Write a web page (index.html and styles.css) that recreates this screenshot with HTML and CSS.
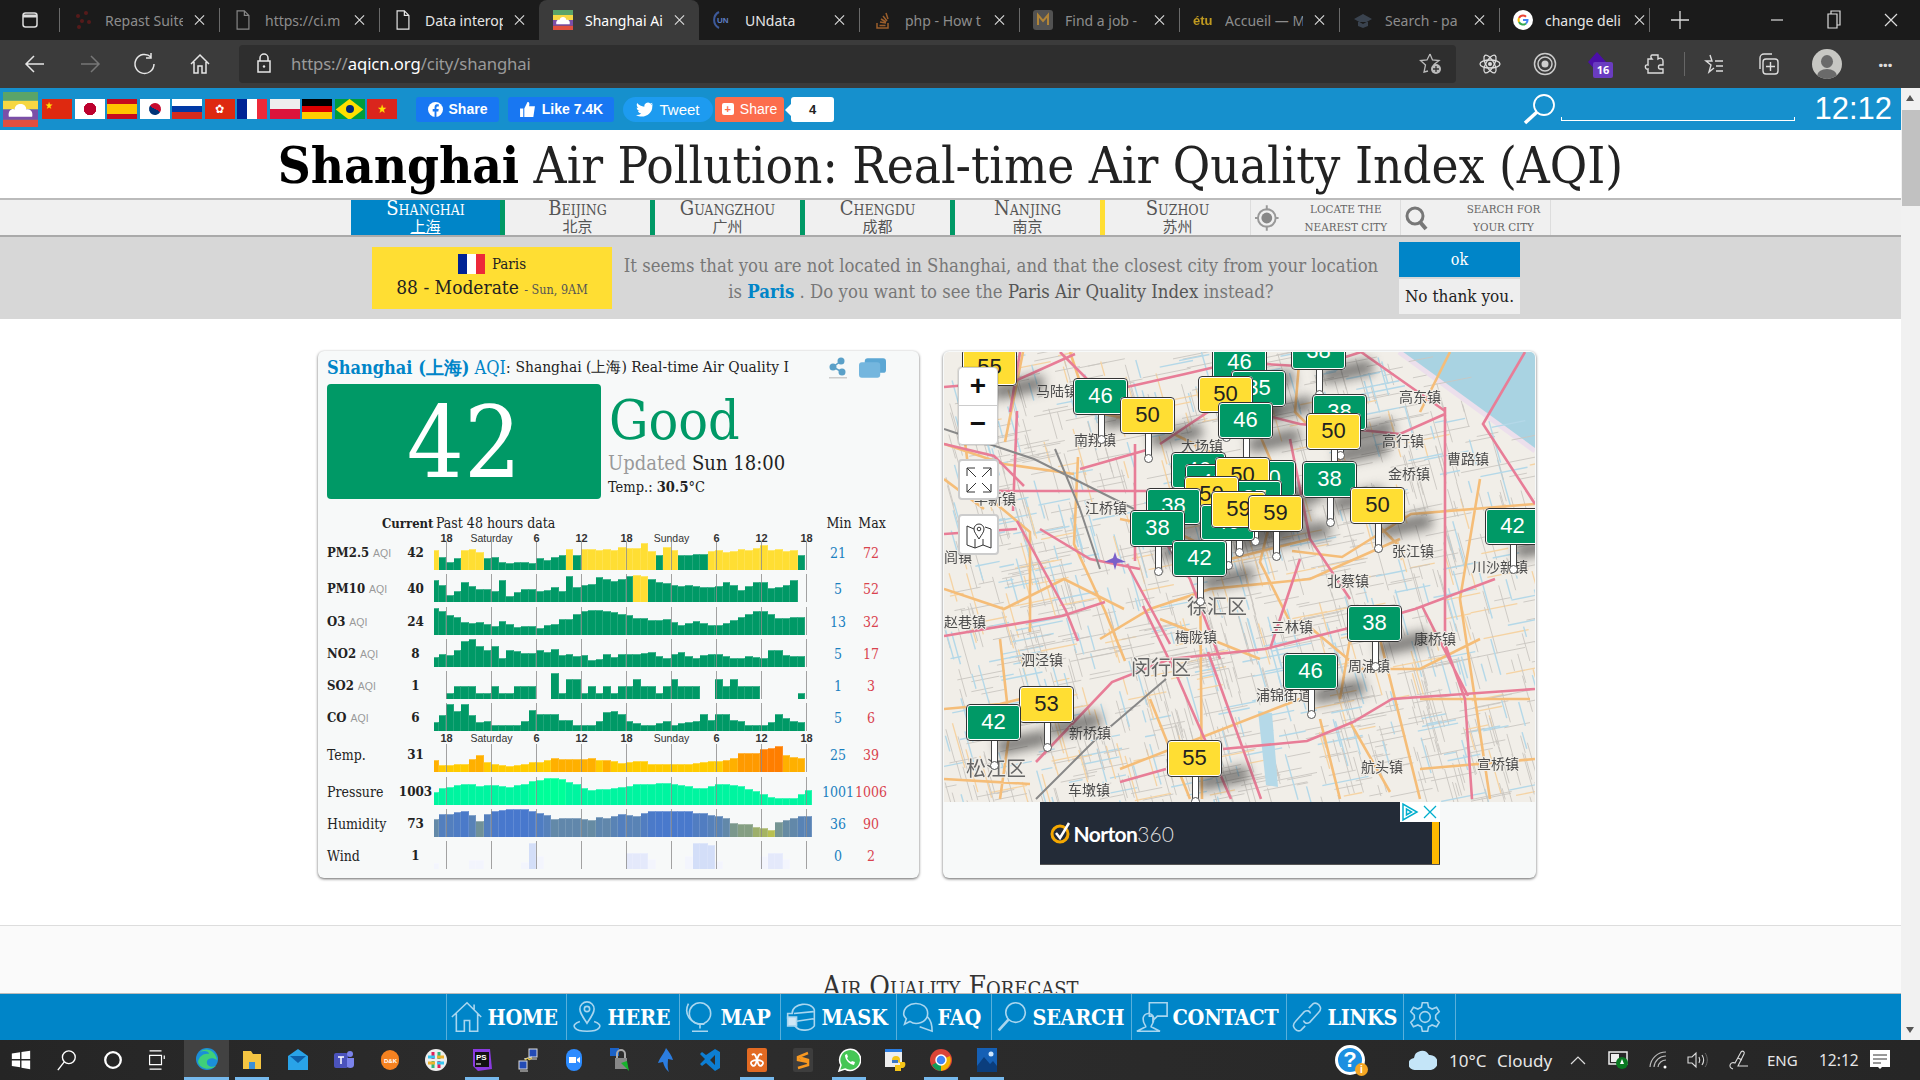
FILE: index.html
```html
<!DOCTYPE html>
<html lang="en">
<head>
<meta charset="utf-8">
<title>Shanghai Air Pollution</title>
<link rel="stylesheet" href="styles.css">
</head>
<body>
<svg class="sprite" width="0" height="0">
  <symbol id="x" viewBox="0 0 12 12"><path d="M1 1l10 10M11 1L1 11" fill="none" stroke="currentColor" stroke-width="1.2"/></symbol>
  <symbol id="doc" viewBox="0 0 16 22"><path d="M1.5 1h8l5 5v15h-13zM9.500 1v5h5" fill="none" stroke="currentColor" stroke-width="1.300"/></symbol>
  <symbol id="aq" viewBox="0 0 24 24"><rect width="24" height="6" fill="#5aa469"/><rect y="6" width="24" height="6" fill="#f6d743"/><rect y="12" width="24" height="7" fill="#7b4fa8"/><rect y="19" width="24" height="5" fill="#e04f3f"/><path d="M4 17c-1-5 3-6 4-5 0-5 8-5 8 0 2-1 5 1 4 5z" fill="#fff"/></symbol>
</svg>
<header class="tabs">
  <span class="win-ico"><svg width="20" height="20" viewBox="0 0 20 20"><rect x="3" y="3" width="14" height="14" rx="2.500" fill="none" stroke="#ddd" stroke-width="1.500"/><path d="M3 6h14" stroke="#ddd" stroke-width="3"/></svg></span>
  <div class="tab dim"><svg class="fav" viewBox="0 0 20 20"><g fill="#5a1a1a"><circle cx="5" cy="6" r="2"/><circle cx="13" cy="3" r="2"/><circle cx="9" cy="11" r="2"/><circle cx="16" cy="12" r="2"/><circle cx="6" cy="17" r="2"/></g></svg><span class="tt">Repast Suite</span><svg class="x"><use href="#x"/></svg></div>
  <div class="tab dim"><svg class="fav"><use href="#doc"/></svg><span class="tt">https://ci.m</span><svg class="x"><use href="#x"/></svg></div>
  <div class="tab"><svg class="fav"><use href="#doc"/></svg><span class="tt">Data interop</span><svg class="x"><use href="#x"/></svg></div>
  <div class="tab active"><svg class="fav"><use href="#aq"/></svg><span class="tt">Shanghai Ai</span><svg class="x"><use href="#x"/></svg></div>
  <div class="tab nosep"><svg class="fav" viewBox="0 0 20 20"><path d="M6 2a9 9 0 0 0 0 16" fill="none" stroke="#3e5a9a" stroke-width="2"/><text x="4" y="13" class="favtxt">UN</text></svg><span class="tt">UNdata</span><svg class="x"><use href="#x"/></svg></div>
  <div class="tab dim"><svg class="fav" viewBox="0 0 20 20"><path d="M4 13v5h11v-5M6.500 15.500h6M7 12l6 1M8 9l5 3M10 6l4 5M13 3l2 6" fill="none" stroke="#a2622c" stroke-width="1.500"/></svg><span class="tt">php - How t</span><svg class="x"><use href="#x"/></svg></div>
  <div class="tab dim"><svg class="fav" viewBox="0 0 20 20"><rect width="20" height="20" rx="3" fill="#555"/><path d="M5 15V5l5 6 5-6v10" fill="none" stroke="#b88a3a" stroke-width="2"/></svg><span class="tt">Find a job -</span><svg class="x"><use href="#x"/></svg></div>
  <div class="tab dim"><svg class="fav" viewBox="0 0 20 20"><text x="0" y="15" class="favetu">étu</text></svg><span class="tt">Accueil — M</span><svg class="x"><use href="#x"/></svg></div>
  <div class="tab dim"><svg class="fav" viewBox="0 0 20 20"><path d="M1 9l9-5 9 5-9 5zM5 12v4l5 2 5-2v-4" fill="#3c4652"/></svg><span class="tt">Search - pa</span><svg class="x"><use href="#x"/></svg></div>
  <div class="tab"><svg class="fav" viewBox="0 0 20 20"><circle cx="10" cy="10" r="10" fill="#fff"/><path d="M10 5.500a4.500 4.500 0 0 1 3 1.200" fill="none" stroke="#ea4335" stroke-width="2"/><path d="M6 8a4.500 4.500 0 0 1 4-2.500" fill="none" stroke="#ea4335" stroke-width="2"/><path d="M6 8a4.500 4.500 0 0 0 0 4" fill="none" stroke="#fbbc05" stroke-width="2"/><path d="M6 12a4.500 4.500 0 0 0 7 1.500" fill="none" stroke="#34a853" stroke-width="2"/><path d="M13 13.500A4.500 4.500 0 0 0 14.500 10H10" fill="none" stroke="#4285f4" stroke-width="2"/></svg><span class="tt">change deli</span><svg class="x"><use href="#x"/></svg></div>
  <div class="newtab"><svg width="18" height="18" viewBox="0 0 18 18"><path d="M9 0v18M0 9h18" stroke="#ddd" stroke-width="1.300"/></svg></div>
  <div class="winbtns">
    <svg width="14" height="14" viewBox="0 0 14 14"><path d="M1 7h12" stroke="#ddd" stroke-width="1.200"/></svg>
    <svg width="14" height="22" viewBox="0 0 14 22"><path d="M1 5h9v14H1zM4 5V2h9v14h-3" fill="none" stroke="#ddd" stroke-width="1.200"/></svg>
    <svg width="14" height="14" viewBox="0 0 14 14"><path d="M1 1l12 12M13 1L1 13" stroke="#ddd" stroke-width="1.200"/></svg>
  </div>
</header>
<nav class="toolbar">
  <svg class="ti" viewBox="0 0 24 24"><path d="M21 12H4M11 4l-8 8 8 8" fill="none" stroke="#e6e6e6" stroke-width="1.500"/></svg>
  <svg class="ti" viewBox="0 0 24 24"><path d="M3 12h17M13 4l8 8-8 8" fill="none" stroke="#777" stroke-width="1.500"/></svg>
  <svg class="ti" viewBox="0 0 24 24"><path d="M18 5a9.500 9.500 0 1 0 3 7M18 1v5h-5" fill="none" stroke="#e6e6e6" stroke-width="1.500"/></svg>
  <svg class="ti" viewBox="0 0 24 24"><path d="M3 12l9-9 9 9M6 10v11h4v-7h4v7h4V10" fill="none" stroke="#e6e6e6" stroke-width="1.500"/></svg>
  <div class="addr">
    <svg class="lock" viewBox="0 0 16 20"><path d="M4 8V5a4 4 0 0 1 8 0v3M2 8h12v11H2z" fill="none" stroke="#e6e6e6" stroke-width="1.500"/><circle cx="8" cy="13.500" r="1.200" fill="#e6e6e6"/></svg>
    <span class="url">https://<em>aqicn.org</em>/city/shanghai</span>
    <svg class="star" viewBox="0 0 24 24"><path d="M11 3l2.500 6 6.500.5-5 4 1.500 4.500M9 20l-4 1 1.500-7-5-4.500 6.500-.5L11 3" fill="none" stroke="#bbb" stroke-width="1.300"/><circle cx="17" cy="18" r="5" fill="#bbb"/><path d="M17 15v6M14 18h6" stroke="#333" stroke-width="1.300"/></svg>
  </div>
  <div class="exts">
    <svg viewBox="0 0 24 24"><g fill="none" stroke="#ddd" stroke-width="1.300"><ellipse cx="12" cy="12" rx="10" ry="4"/><ellipse cx="12" cy="12" rx="10" ry="4" transform="rotate(60 12 12)"/><ellipse cx="12" cy="12" rx="10" ry="4" transform="rotate(120 12 12)"/></g><circle cx="12" cy="12" r="2" fill="#ddd"/></svg>
    <svg viewBox="0 0 24 24"><g fill="none" stroke="#ccc"><circle cx="12" cy="12" r="10.500" stroke-width="1.500"/><circle cx="12" cy="12" r="7" stroke-width="1.500"/></g><circle cx="12" cy="12" r="3.500" fill="#ccc"/></svg>
    <span class="ext-purple"><svg viewBox="0 0 24 24"><path d="M12 0l9 10-9 10-9-10z" fill="#4b0fa8"/></svg><b>16</b></span>
    <svg viewBox="0 0 24 24"><path d="M9 3h6v4c3-2 5 0 5 2v4h-3c-2 0-2 4 0 4h3v4H5v-4c-3 1-4-5 0-4V7h4c-2-2-1-4 0-4z" fill="none" stroke="#ddd" stroke-width="1.400"/></svg>
    <i class="exsep"></i>
    <svg viewBox="0 0 24 24"><path d="M9 3l2 6h-6l5 4-2 7 5-4M14 9h8M15 14h7M15 19h7" fill="none" stroke="#ddd" stroke-width="1.400"/></svg>
    <svg viewBox="0 0 24 24"><rect x="7" y="7" width="15" height="15" rx="3" fill="none" stroke="#ddd" stroke-width="1.400"/><path d="M14.500 10v9M10 14.500h9M4 17V6a4 4 0 0 1 4-4h8" fill="none" stroke="#ddd" stroke-width="1.400"/></svg>
    <span class="avatar"><i></i></span>
    <span class="dots">···</span>
  </div>
</nav>
<div class="viewport">
  <main class="page">
    <div class="topbar">
      <span class="logo"><svg width="35" height="35"><use href="#aq"/></svg></span>
      <div class="flags">
        <i class="flag cn">★</i><i class="flag jp"></i><i class="flag es"></i><i class="flag kr"></i><i class="flag ru"></i><i class="flag hk">✿</i><i class="flag fr"></i><i class="flag pl"></i><i class="flag de"></i><i class="flag br"></i><i class="flag vn">★</i>
      </div>
      <a class="sb fb"><svg width="15" height="15" viewBox="0 0 16 16"><circle cx="8" cy="8" r="8" fill="#fff"/><path d="M9 16V10h2l.4-2.500H9V6c0-1 .5-1.300 1.300-1.300h1.200V2.500C10 2.200 7 2 7 5.500v2H5V10h2v6z" fill="#1877f2"/></svg>Share</a>
      <a class="sb like"><svg width="17" height="17" viewBox="0 0 16 16"><path d="M1 7h3v8H1zM5 7l3-6c2 0 2 2 1.500 4H15l-1.500 10H5z" fill="#fff"/></svg>Like 7.4K</a>
      <a class="sb tw"><svg width="17" height="15" viewBox="0 0 24 20"><path d="M24 2.500c-1 .5-2 .7-3 .8 1-.7 2-1.700 2.400-3-1 .6-2 1-3.200 1.300A5 5 0 0 0 11.800 6C7.700 5.800 4 3.800 1.700.9c-1.300 2.400-.6 5.200 1.500 6.700-.8 0-1.600-.2-2.200-.6 0 2.400 1.700 4.500 4 5-.8.200-1.500.200-2.200.100.600 2 2.500 3.400 4.600 3.400A10 10 0 0 1 0 17.600C10 24 24 17 23 4.500c.4-.6.800-1.300 1-2z" fill="#fff"/></svg>Tweet</a>
      <a class="sb sh"><i class="plus">+</i>Share</a>
      <span class="count">4</span>
      <svg class="srch" width="36" height="32" viewBox="0 0 36 32"><circle cx="22" cy="12" r="10" fill="none" stroke="#fff" stroke-width="1.800"/><path d="M15 19L3 30" stroke="#fff" stroke-width="3.500"/></svg>
      <span class="line"></span>
      <span class="clock">12:12</span>
    </div>
    <h1 class="title"><b>Shanghai</b> Air Pollution: Real-time Air Quality Index (AQI)</h1>
    <div class="citynav">
      <a class="city on bar-g">Shanghai<span class="cn-name"><u>上海</u></span></a>
      <a class="city bar-g">Beijing<span class="cn-name">北京</span></a>
      <a class="city bar-g">Guangzhou<span class="cn-name">广州</span></a>
      <a class="city bar-g">Chengdu<span class="cn-name">成都</span></a>
      <a class="city bar-y">Nanjing<span class="cn-name">南京</span></a>
      <a class="city last">Suzhou<span class="cn-name">苏州</span></a>
      <a class="tool"><svg width="24" height="28" viewBox="0 0 24 28"><circle cx="12" cy="14" r="9" fill="none" stroke="#999" stroke-width="2"/><circle cx="12" cy="14" r="5.500" fill="#888"/><path d="M12 1v5M12 22v5M0 14h3M21 14h3" stroke="#999" stroke-width="2"/></svg><span>Locate the<br>nearest city</span></a>
      <a class="tool"><svg width="24" height="28" viewBox="0 0 24 28"><circle cx="10" cy="12" r="8" fill="none" stroke="#777" stroke-width="3"/><path d="M15 18l6 7" stroke="#777" stroke-width="4"/></svg><span>Search for<br>your city</span></a>
    </div>
    <section class="suggest">
      <div class="nearest">
        <div class="np"><i class="flag fr fr2"></i>Paris</div>
        <div class="nv">88 - Moderate <small>- Sun, 9AM</small></div>
      </div>
      <p class="sgtext">It seems that you are not located in Shanghai, and that the closest city from your location<br>is <a>Paris</a> . Do you want to see the <span>Paris Air Quality Index</span> instead?</p>
      <div class="sgbtn"><a class="ok">ok</a><a class="no">No thank you.</a></div>
    </section>
    <section class="cards">
      <article class="card aq">
        <div class="chead"><span class="cname"><b>Shanghai (上海)</b> AQI</span>: <span class="csub">Shanghai (上海) Real-time Air Quality I</span>
          <svg class="c-ic1" width="20" height="22" viewBox="0 0 20 22"><g fill="#5aa0c8"><circle cx="13" cy="4" r="3.500"/><circle cx="5" cy="10" r="3.500"/><circle cx="14" cy="15" r="3.500"/></g><path d="M13 4l-8 6 9 5" stroke="#5aa0c8" fill="none" stroke-width="1.500"/><rect x="1" y="20" width="18" height="1.500" fill="#ccc"/></svg>
          <svg class="c-ic2" width="28" height="20" viewBox="0 0 28 20"><rect x="6" y="0" width="22" height="15" rx="3" fill="#5ca7d4"/><rect x="0" y="4" width="22" height="16" rx="3" fill="#74b6de"/></svg>
        </div>
        <div class="now">
          <div class="bignum">42</div>
          <div class="status">
            <div class="good-txt">Good</div>
            <div class="upd"><span>Updated</span> Sun 18:00</div>
            <div class="temp">Temp.: <b>30.5</b>°C</div>
          </div>
        </div>
        <div class="tbl">
          <div class="thead"><b>Current</b><span class="past">Past 48 hours data</span><span class="mn">Min</span><span class="mx">Max</span></div>
          <div class="hours"><i>18</i><i>Saturday</i><i>6</i><i>12</i><i>18</i><i>Sunday</i><i>6</i><i>12</i><i>18</i></div>
          <div class="row r1"><span class="lab"><b>PM2.5</b> <small>AQI</small></span><b class="cur">42</b><div class="chart" data-k="pm25"></div><span class="mn">21</span><span class="mx">72</span></div>
          <div class="row"><span class="lab"><b>PM10</b> <small>AQI</small></span><b class="cur">40</b><div class="chart" data-k="pm10"></div><span class="mn">5</span><span class="mx">52</span></div>
          <div class="row"><span class="lab"><b>O3</b> <small>AQI</small></span><b class="cur">24</b><div class="chart" data-k="o3"></div><span class="mn">13</span><span class="mx">32</span></div>
          <div class="row"><span class="lab"><b>NO2</b> <small>AQI</small></span><b class="cur">8</b><div class="chart" data-k="no2"></div><span class="mn">5</span><span class="mx">17</span></div>
          <div class="row"><span class="lab"><b>SO2</b> <small>AQI</small></span><b class="cur">1</b><div class="chart" data-k="so2"></div><span class="mn">1</span><span class="mx">3</span></div>
          <div class="row"><span class="lab"><b>CO</b> <small>AQI</small></span><b class="cur">6</b><div class="chart" data-k="co"></div><span class="mn">5</span><span class="mx">6</span></div>
          <div class="hours h2"><i>18</i><i>Saturday</i><i>6</i><i>12</i><i>18</i><i>Sunday</i><i>6</i><i>12</i><i>18</i></div>
          <div class="row r1"><span class="lab">Temp.</span><b class="cur">31</b><div class="chart" data-k="temp"></div><span class="mn">25</span><span class="mx">39</span></div>
          <div class="row"><span class="lab">Pressure</span><b class="cur">1003</b><div class="chart" data-k="pres"></div><span class="mn">1001</span><span class="mx">1006</span></div>
          <div class="row"><span class="lab">Humidity</span><b class="cur">73</b><div class="chart" data-k="hum"></div><span class="mn">36</span><span class="mx">90</span></div>
          <div class="row"><span class="lab">Wind</span><b class="cur">1</b><div class="chart" data-k="wind"></div><span class="mn">0</span><span class="mx">2</span></div>
        </div>
      </article>
      <article class="card mapcard">
        <div class="map" id="map">
          <svg class="mapsvg" viewBox="944 353 591 450" width="591" height="450">
            <rect x="944" y="353" width="591" height="450" fill="#f1eee8"/>
            <path d="M1399 353L1535 452V353z" fill="#a9d3e2"/>
            <path d="M1399 353L1535 452" stroke="#ecdfec" stroke-width="5" fill="none"/>
            <g id="minor"></g>
            <path d="M1258 712l14 2 6 74-12-2z" fill="#b5d9e8"/>
            <g fill="none" stroke="#f5bd78" stroke-width="2.600">
              <path d="M1078 458l-4 87 31 67 20 50M1292 552l50 6 69-43 124-10M944 710l56-5 62-15M944 780l86 5M1120 770l180-70M1200 560l2 240M1023 353l-18 90M1070 353l20 60 60 10 60 30M1300 353l-5 60 40 40 30 60 40 40M1380 640l40 160M1340 700l10-60M1450 353l-30 60M1120 520l50 10 60 30 80-20M944 445l60 20 70 10M1350 723l40 70M1420 700l110 0M1420 770l115-10M1160 620l100 40M1000 353l-40 50 10 80 60 50 0 100M1100 640l50-30 60-20 100-10 90-40M1240 353l10 60 30 70 -20 80 30 60M1480 480l-20 120 30 200M944 590l60 20 60-30 60 30M1000 640l10 90-10 70M1150 700l40 100M1320 720l20 80M944 480l40 30M1300 620l60 50 60 0 60-30"/>
            </g>
            <g fill="none" stroke="#e87d97" stroke-width="2.600">
              <path d="M944 388l71-6 60-27M1127 388l58-13 30-7 50-3 50 3 46-15M1445 408v237l20 55 7 100M1361 353l84 59M1525 353l-42 72 52 80M997 492h150M944 535l73-5M1017 522l49 90 12 30M944 637l118-20 43-14M1036 763l76-80 58-23 95-10 80-20 70-20 80-30M1223 750l84-8 46-19 39-23 72-5 71-5M1120 783l46-13M1143 607l34 70 54 123M1208 653l53 147M1017 412l-4 100M1135 445v117M1127 565l43 80M944 445l50 12 30 30M1160 445l60-40 80 20 100 10 45-20M1422 607l46 90M1020 353l-10 60M1080 470l70-20M1290 440l20 100 40 60M1150 520l40 60 30 80M1060 353l40 40M1040 530l50 30 50 10M1300 560l-30 90"/>
            </g>
            <g fill="none" stroke="#888" stroke-width="2"><path d="M944 430l90 30 100 50M1055 450l25 60 20 60M1036 800l60-60 70-60"/></g>
            <path d="M1115 553l2 6 9 4-9 1-2 7-2-7-9-1 9-4z" fill="#7a60c9"/>
            <g class="ml">
              <text x="1036" y="397">马陆镇</text><text x="1074" y="446">南翔镇</text><text x="1181" y="452">大场镇</text><text x="1399" y="403">高东镇</text><text x="1382" y="447">高行镇</text><text x="1447" y="465">曹路镇</text><text x="1388" y="480">金桥镇</text><text x="1085" y="514">江桥镇</text><text x="974" y="505">华新镇</text><text x="1392" y="557">张江镇</text><text x="1472" y="573">川沙新镇</text><text x="1327" y="587">北蔡镇</text><text x="1271" y="633">三林镇</text><text x="944" y="628">赵巷镇</text><text x="1175" y="643">梅陇镇</text><text x="1414" y="645">康桥镇</text><text x="1021" y="666">泗泾镇</text><text x="1348" y="672">周浦镇</text><text x="1256" y="701">浦锦街道</text><text x="1069" y="739">新桥镇</text><text x="1068" y="796">车墩镇</text><text x="1361" y="773">航头镇</text><text x="1477" y="770">宣桥镇</text><text x="944" y="563">闾镇</text>
              <text class="big" x="1187" y="615">徐汇区</text><text class="big" x="1131" y="676">闵行区</text><text class="big" x="966" y="777">松江区</text>
            </g>
          </svg>
          <div class="layer" id="shadows"></div>
          <div class="layer" id="markers"></div>
          <div class="mctl">
            <div class="zoom"><a>+</a><a>−</a></div>
            <a class="mbtn mfs"><svg width="26" height="26" viewBox="0 0 26 26"><path d="M1 9V1h8M1 1l9 9M17 1h8v8M25 1l-9 9M1 17v8h8M1 25l9-9M25 17v8h-8M25 25l-9-9" fill="none" stroke="#333" stroke-width="1"/></svg></a>
            <a class="mbtn mlay"><svg width="26" height="28" viewBox="0 0 26 28"><path d="M8 8L1 5v19l8 3 8-3 8 3V8l-6-2M9 27v-9M17 24v-6" fill="none" stroke="#333"/><path d="M13 18c-3-5-5-7-5-10a5 5 0 0 1 10 0c0 3-2 5-5 10z" fill="#fff" stroke="#333"/><circle cx="13" cy="8" r="1.800" fill="none" stroke="#333"/></svg></a>
          </div>
        </div>
        <div class="ad">
          <svg class="nlogo" width="22" height="22" viewBox="0 0 22 22"><circle cx="10" cy="12" r="8" fill="none" stroke="#f5a800" stroke-width="3"/><path d="M6 11l4 5 9-15" fill="none" stroke="#fff" stroke-width="2.500"/></svg>
          <span class="ntxt">Norton<span>360</span></span>
          <span class="adx"><svg width="20" height="20" viewBox="0 0 20 20"><path d="M3 2v16l14-8zM6.500 7v6l5-3z" fill="none" stroke="#00aecd" stroke-width="1.500"/></svg><svg width="20" height="20" viewBox="0 0 20 20"><path d="M4 4l12 12M16 4L4 16" stroke="#00aecd" stroke-width="1.300"/></svg></span>
          <i class="adbar"></i>
        </div>
      </article>
    </section>
    <section class="forecast"><h2>Air Quality Forecast</h2></section>
    <div class="menu">
      <a><svg viewBox="0 0 36 36"><path d="M1 18L18 2l16 16M6 14v20h9V22h6v12h9V14M26 4v6" /></svg><b>HOME</b></a>
      <a><svg viewBox="0 0 36 36"><path d="M18 25C12 16 10 13 10 9a8 8 0 0 1 16 0c0 4-2 7-8 16zM10 23c-12 4-6 11 8 11s20-7 8-11"/><circle cx="18" cy="9" r="3"/></svg><b>HERE</b></a>
      <a><svg viewBox="0 0 36 36"><circle cx="18" cy="14" r="12"/><path d="M5 3c-6 12 3 24 18 23M18 27v4M9 34h18"/></svg><b>MAP</b></a>
      <a><svg viewBox="0 0 36 36"><path d="M8 14c0-12 22-14 25-4v18c-4 6-16 6-20 2L3 20v-6zM10 14l22-2M11 23l21-3"/><path d="M3 18h10v10H3z" fill="#cfe7f5"/></svg><b>MASK</b></a>
      <a><svg viewBox="0 0 36 36"><path d="M3 15C3-1 30-1 30 14c0 10-13 14-20 9l-6 3 2-6c-2-2-3-3-3-5zM30 18c4 4 5 8 5 16l-14-5"/></svg><b>FAQ</b></a>
      <a><svg viewBox="0 0 36 36"><circle cx="22" cy="13" r="11"/><path d="M14 21L3 33" stroke-width="3"/></svg><b>SEARCH</b></a>
      <a><svg viewBox="0 0 36 36"><path d="M15 2h20v15H24l-5 5v-5h-4zM8 20a6 6 0 0 1 12 0c0 6-3 7-3 9l10 5H1l10-5c0-2-3-3-3-9z"/></svg><b>CONTACT</b></a>
      <a><svg viewBox="0 0 36 36"><path d="M20 8l5-5c3-2 7 1 8 4s0 4-2 6L21 24c-3 2-6 1-7-2M16 28l-5 5c-3 2-7-1-8-4s0-4 2-6l10-11c3-2 6-1 7 2"/></svg><b>LINKS</b></a>
      <a class="gear"><svg viewBox="0 0 36 36"><circle cx="18" cy="18" r="6"/><path d="M15 2h6l1 5 4 2 5-2 3 5-4 4v4l4 4-3 5-5-2-4 2-1 5h-6l-1-5-4-2-5 2-3-5 4-4v-4L2 12l3-5 5 2 4-2z"/></svg></a>
    </div>
  </main>
  <aside class="scroll"><span class="up"></span><span class="thumb"></span><span class="down"></span></aside>
</div>
<footer class="taskbar">
  <div class="tleft">
    <span class="tk"><svg viewBox="0 0 24 24"><path d="M2 5l9-1.500V11H2zM12.500 3.200L22 2v9h-9.500zM2 12.500h9V20l-9-1.500zM12.500 12.500H22V22l-9.500-1.500z" fill="#fff"/></svg></span>
    <span class="tk"><svg viewBox="0 0 24 24"><circle cx="14" cy="9" r="7" fill="none" stroke="#fff" stroke-width="1.500"/><path d="M9 14l-7 9" stroke="#fff" stroke-width="1.500"/></svg></span>
    <span class="tk"><svg viewBox="0 0 24 24"><circle cx="12" cy="12" r="8.500" fill="none" stroke="#fff" stroke-width="2.500"/></svg></span>
    <span class="tk"><svg viewBox="0 0 24 24"><path d="M5 2h13M5 22h13M5 7h13v10H5zM21 7v4" fill="none" stroke="#fff" stroke-width="1.300"/></svg></span>
    <span class="tk act2"><svg viewBox="0 0 24 24"><circle cx="12" cy="12" r="11" fill="#1b8fd8"/><path d="M3 15c2 7 12 9 18 4-5 2-10 0-9-5 1-3 6-4 10-1C21 5 12-1 5 5c4-2 9-1 9 2-5-1-10 2-11 8z" fill="#3fd07a"/></svg></span>
    <span class="tk run"><svg viewBox="0 0 24 24"><path d="M3 3h8l2 3h8v15H3z" fill="#f5c542"/><path d="M9 14h6v7H9z" fill="#3a8fd8"/></svg></span>
    <span class="tk"><svg viewBox="0 0 24 24"><path d="M2 8l10-7 10 7v14H2z" fill="#29a3e8"/><path d="M4 8l8 7 8-7z" fill="#0e5fa8"/></svg></span>
    <span class="tk"><svg viewBox="0 0 24 24"><rect x="2" y="5" width="14" height="15" rx="2" fill="#4b53bc"/><circle cx="18" cy="6" r="3" fill="#7b83eb"/><path d="M15 10h7v7c0 3-4 4-7 2z" fill="#7b83eb"/><path d="M6 9h6M9 9v7" stroke="#fff" stroke-width="1.500"/></svg></span>
    <span class="tk"><svg viewBox="0 0 24 24"><rect x="3" y="2" width="18" height="20" rx="9" fill="#f58220"/><text x="6" y="15" class="dak">D&amp;K</text></svg></span>
    <span class="tk"><svg viewBox="0 0 24 24"><circle cx="12" cy="12" r="11" fill="#eee"/><path d="M9 4v7M15 13v7" stroke="#e01e5a" stroke-width="3"/><path d="M4 9h7M13 15h7" stroke="#36c5f0" stroke-width="3"/><path d="M15 4v7M9 13v7" stroke="#2eb67d" stroke-width="3"/><path d="M13 9h7M4 15h7" stroke="#ecb22e" stroke-width="3"/></svg></span>
    <span class="tk run"><svg viewBox="0 0 24 24"><path d="M3 1h17l2 20-14 2-5-5z" fill="#8a3ae0"/><rect x="5" y="4" width="14" height="15" fill="#111"/><text x="6" y="12" class="ps">PS</text><path d="M6 16h5" stroke="#fff"/></svg></span>
    <span class="tk"><svg viewBox="0 0 24 24"><rect x="13" y="1" width="8" height="8" fill="#234bb5" stroke="#ddd"/><rect x="3" y="13" width="8" height="8" fill="#234bb5" stroke="#ddd"/><path d="M4 23h8M13 11h8M8 11l8-2" stroke="#ddd"/><path d="M9 12l3-2 1 2 3-2" stroke="#f5d442" fill="none"/></svg></span>
    <span class="tk"><svg viewBox="0 0 24 24"><rect x="4" y="1" width="16" height="22" rx="8" fill="#2d8cff"/><path d="M7 9h7v6H7zM15 11l3-2v6l-3-2z" fill="#fff"/></svg></span>
    <span class="tk"><svg viewBox="0 0 24 24"><path d="M2 0h9v8H2z" fill="#1a62c8"/><rect x="7" y="10" width="12" height="11" fill="#888"/><path d="M9 10V6a4 4 0 0 1 8 0v4" fill="none" stroke="#aaa" stroke-width="2"/><path d="M13 15l8 8-2-10z" fill="#18b32c"/></svg></span>
    <span class="tk"><svg viewBox="0 0 24 24"><path d="M13 0c3 4 6 8 7 12l-5-1c0 4-1 8 1 13-4-3-5-7-6-10l-5 1c2-6 6-9 8-15z" fill="#2b7de0"/></svg></span>
    <span class="tk"><svg viewBox="0 0 24 24"><path d="M16 1l5 3v16l-5 3-9-8-4 3-2-2 5-5-5-5 2-2 4 3zM16 7l-5 5 5 5z" fill="#0d7ed3"/></svg></span>
    <span class="tk run"><svg viewBox="0 0 24 24"><rect x="2" y="0" width="20" height="24" rx="2" fill="#e26a22"/><path d="M7 7c3-3 4 2 5 5s2 8 5 5-1-5-5-5-8 2-5 5 4-2 5-5 2-8 5-5" fill="none" stroke="#fff" stroke-width="1.800"/></svg></span>
    <span class="tk"><svg viewBox="0 0 24 24"><rect x="2" y="0" width="20" height="24" rx="2" fill="#3d3d3d"/><path d="M17 5L7 9v3l10 2v3L7 20M7 9l10 3v2" stroke="#f89820" stroke-width="2.500" fill="none"/></svg></span>
    <span class="tk run"><svg viewBox="0 0 24 24"><path d="M2 23l2-6a10.500 10.500 0 1 1 4 4z" fill="#45c655" stroke="#fff" stroke-width="1.500"/><path d="M8 7c0 5 4 9 9 10l1-3-3-1-1 1c-2-1-3-2-4-4l1-1-1-3z" fill="#fff"/></svg></span>
    <span class="tk"><svg viewBox="0 0 24 24"><rect x="2" y="1" width="17" height="18" fill="#eee"/><path d="M2 1h17v3H2z" fill="#2b7de0"/><path d="M9 12a4 4 0 0 1 8 0v2h4c2 0 2 5-1 6h-2v3h-6v-6h5v-2z" fill="#f5c518"/><path d="M9 12h6v3H9z" fill="#3a77c4"/></svg></span>
    <span class="tk run"><svg viewBox="0 0 24 24"><circle cx="12" cy="12" r="11" fill="#db4437"/><path d="M12 12L3 17a11 11 0 0 0 9 6z" fill="#0f9d58"/><path d="M12 12l9-4a11 11 0 0 1-9 15z" fill="#f4b400"/><circle cx="12" cy="12" r="5" fill="#4285f4" stroke="#fff" stroke-width="1.500"/></svg></span>
    <span class="tk run"><svg viewBox="0 0 24 24"><rect x="2" y="0" width="20" height="24" fill="#1560b5"/><path d="M2 24v-6l7-9 6 7 3-3 4 5v6z" fill="#0b3e7d"/><circle cx="16" cy="6" r="2.500" fill="#cfe7ff"/></svg></span>
  </div>
  <div class="tray">
    <span class="help">?<i>i</i></span>
    <svg class="cloud" width="28" height="22" viewBox="0 0 28 22"><path d="M6 21a6 6 0 0 1-1-12 8 8 0 0 1 15-3 7 7 0 0 1 2 15z" fill="#c4e5f8"/></svg>
    <span class="tt1">10°C</span><span class="tt2">Cloudy</span>
    <svg class="chev" width="16" height="10" viewBox="0 0 16 10"><path d="M1 9l7-7 7 7" fill="none" stroke="#ddd" stroke-width="1.200"/></svg>
    <svg class="batt" width="22" height="20" viewBox="0 0 22 20"><rect x="1" y="2" width="18" height="12" fill="none" stroke="#eee" stroke-width="1.500"/><rect x="3" y="4" width="8" height="8" fill="#eee"/><circle cx="14" cy="13" r="6" fill="#0a7a22"/><path d="M14 9l-2 5h4z" fill="#fff"/></svg>
    <svg class="wifi" width="22" height="18" viewBox="0 0 22 18"><path d="M1 16A16 16 0 0 1 17 1M5 16A12 12 0 0 1 17 5M9 16a8 8 0 0 1 8-7" fill="none" stroke="#bbb" stroke-width="1.200"/><circle cx="16" cy="16" r="1.500" fill="#fff"/></svg>
    <svg class="vol" width="22" height="18" viewBox="0 0 22 18"><path d="M1 6h4l4-4v14l-4-4H1zM12 6c1 2 1 4 0 6M15 4c2 3 2 7 0 10" fill="none" stroke="#ddd" stroke-width="1.100"/><path d="M18 2c3 4 3 10 0 14" fill="none" stroke="#666"/></svg>
    <svg class="pen" width="22" height="22" viewBox="0 0 22 22"><path d="M6 20c-6-2-2-8 2-6l6-11c2-2 4 0 3 2l-6 12h10M11 9l4 2" fill="none" stroke="#ddd" stroke-width="1.100"/></svg>
    <span class="eng">ENG</span>
    <span class="tclock">12:12</span>
    <svg class="note" width="22" height="22" viewBox="0 0 22 22"><path d="M1 1h20v17h-8l-2 2-2-2H1z" fill="#fff"/><path d="M4 6h14M4 10h14M4 14h8" stroke="#333"/></svg>
  </div>
</footer>
<script src="script.js"></script>
</body>
</html>
```
FILE: styles.css
```css
*{box-sizing:border-box}
html,body{margin:0;height:100%;overflow:hidden}
body{width:1920px;height:1080px;display:flex;flex-direction:column;font-family:"Noto Sans",sans-serif;background:#fff}
a{color:inherit;text-decoration:none}
i,em{font-style:normal}
.sprite{position:absolute}
.tabs{height:40px;background:#1b1b1b;display:flex;align-items:center;color:#ddd;flex:none}
.win-ico{width:59px;display:flex;justify-content:center;padding-right:0}
.tab{width:160px;height:40px;display:flex;align-items:center;padding-left:14px;position:relative;font-size:14px;color:#e6e6e6}
.tab::before{content:"";position:absolute;left:0;top:8px;height:24px;width:1px;background:#6a6a6a}
.tab.dim{color:#8d8d8d}
.tab.active{background:#3b3b3b;border-radius:8px 8px 0 0;color:#fff}
.tab.active::before,.tab.nosep::before{display:none}
.fav{width:20px;height:20px;flex:none;overflow:visible}
.tab.dim .fav{opacity:.95}
.tt{margin-left:12px;width:78px;overflow:hidden;white-space:nowrap;flex:none}
.x{width:11px;height:12px;margin-left:11px;flex:none;color:#ddd}
.favtxt{font:bold 8px "Liberation Sans";fill:#5d7dc4}
.favetu{font:bold 13px "Liberation Sans";fill:#c8a020}
.newtab{width:20px;margin-left:12px;height:18px;border-left:0;display:flex;position:relative}
.newtab::before{content:"";position:absolute;left:-22px;top:-3px;height:24px;width:1px;background:#6a6a6a}
.winbtns{margin-left:auto;width:150px;display:flex;justify-content:space-between;align-items:center;padding-right:22px}
.toolbar{height:48px;background:#3b3b3b;display:flex;align-items:center;padding-left:23px;flex:none}
.ti{width:24px;height:24px;margin-right:31px;flex:none}
.addr{width:1217px;height:38px;margin-left:-4px;background:#2e2e2e;border-radius:4px;display:flex;align-items:center;padding:0 0 2px 17px;color:#9a9a9a}
.lock{width:16px;height:20px}
.url{margin-left:19px;font-size:16.700px;letter-spacing:-.1px}
.url em{color:#fff}
.star{width:24px;height:24px;margin-left:auto;margin-right:13px}
.exts{display:flex;align-items:center;margin-left:22px}
.exts>svg{width:24px;height:24px;margin-right:31px;flex:none}
.exts>svg:nth-child(2){margin-right:30px}
.ext-purple{position:relative;width:24px;height:24px;margin-right:34px;margin-left:-2px}
.ext-purple svg{width:24px;height:24px}
.ext-purple b{position:absolute;left:8px;top:10px;width:20px;height:16px;background:#6a3cc0;color:#fff;font-size:11px;line-height:16px;text-align:center;border-radius:2px}
.exsep{width:1px;height:24px;background:#666;margin:0 16px 0 -14px}
.avatar{width:30px;height:30px;border-radius:50%;background:#c7c7c3;position:relative;overflow:hidden;margin-left:1px;flex:none}
.avatar::before{content:"";position:absolute;left:9px;top:6px;width:12px;height:13px;border-radius:50%;background:#6a6a6a}
.avatar i{position:absolute;left:5px;top:20px;width:20px;height:14px;border-radius:50%;background:#6a6a6a}
.dots{color:#ddd;font-size:20px;font-weight:bold;margin-left:36px;letter-spacing:-1px}
.viewport{height:952px;display:flex;flex:none}
.page{width:1901px;position:relative;overflow:hidden;background:#fff;font-family:"DejaVu Serif Condensed","DejaVu Serif",serif;color:#222;font-stretch:condensed}
.scroll{width:19px;background:#f1f1f1;display:flex;flex-direction:column;align-items:stretch}
.up,.down{height:20px;position:relative}
.up::before,.down::before{content:"";position:absolute;left:5px;top:7px;border:4.500px solid transparent;border-top:0;border-bottom:6px solid #555}
.down{margin-top:auto}
.down::before{border-bottom:0;border-top:6px solid #555}
.thumb{height:96px;background:#c1c1c1;margin:2px 0 0 1px}
.topbar{height:42px;background:#1690cd;display:flex;align-items:center;padding-left:3px}
.logo{width:35px;height:35px;flex:none}
.flags{display:flex;gap:2.500px;margin-left:4px;flex:none}
.flag{width:30px;height:20px;display:flex;align-items:center;justify-content:center;font-size:12px;color:#ffde00;line-height:1;font-family:"DejaVu Sans";position:relative;overflow:hidden}
.cn{background:#de2910;justify-content:flex-start;padding-left:3px;font-size:10px;align-items:flex-start;padding-top:2px}
.jp{background:radial-gradient(circle,#bc002d 0 6px,#fff 6.500px)}
.es{background:linear-gradient(#c60b1e 25%,#ffc400 25% 75%,#c60b1e 75%)}
.kr{background:#fff}
.kr::before{content:"";width:12px;height:12px;border-radius:50%;background:linear-gradient(#c60c30 50%,#003478 50%);transform:rotate(30deg)}
.ru{background:linear-gradient(#fff 33%,#0039a6 33% 66%,#d52b1e 66%)}
.hk{background:#de2910;color:#fff}
.fr{background:linear-gradient(90deg,#002395 33%,#fff 33% 66%,#ed2939 66%)}
.pl{background:linear-gradient(#eee 50%,#dc143c 50%)}
.de{background:linear-gradient(#000 33%,#d00 33% 66%,#ffce00 66%)}
.br{background:#009c3b}
.br::before{content:"";width:15px;height:15px;background:#ffdf00;transform:scaleX(1.300) rotate(45deg)}
.br::after{content:"";position:absolute;left:11px;top:6px;width:8px;height:8px;border-radius:50%;background:#002776}
.vn{background:#da251d}
.sb{height:25px;display:flex;align-items:center;justify-content:center;gap:6px;color:#fff;font:bold 14px "Liberation Sans",sans-serif;border-radius:3px;flex:none}
.fb{width:83px;background:#1877f2;margin-left:19px}
.like{width:106px;background:#1877f2;margin-left:9px}
.tw{width:90px;background:#1d9bf0;margin-left:9px;border-radius:13px;font-weight:normal;font-size:15px}
.sh{width:69px;background:#fc6d4c;margin-left:2px;font-weight:normal;font-size:14px}
.plus{width:12px;height:12px;background:#fff;color:#fc6d4c;border-radius:2px;font-size:11px;line-height:12px;text-align:center;font-weight:bold}
.count{width:43px;height:25px;margin-left:7px;background:#fff;color:#222;font:bold 13px/25px "Liberation Sans";text-align:center;border-radius:3px;position:relative;flex:none}
.count::before{content:"";position:absolute;left:-6px;top:7px;border:6px solid transparent;border-left:0;border-right-color:#fff}
.srch{margin-left:auto;flex:none}
.line{width:234px;height:4px;margin:20px 0 0 3px;border:1px solid #fff;border-top:0;flex:none}
.clock{margin-left:19px;margin-right:9px;color:#fff;font:31px "Liberation Sans",sans-serif;flex:none}
.title{margin:0;height:68px;line-height:70px;text-align:center;font-size:50.800px;font-weight:normal;color:#222;white-space:nowrap}
.title b{color:#000}
.citynav{height:39px;background:#f0f0f0;border-top:2px solid #bbb;border-bottom:2px solid #aaa;display:flex;padding-left:351px}
.city{width:150px;display:block;text-align:center;font-variant:small-caps;font-size:20px;line-height:17px;color:#555;padding-top:0;border-right:5px solid #f0f0f0}
.city.bar-g{border-right-color:#009966}
.city.bar-y{border-right-color:#ffde33}
.city.on{background:#0085c8;color:#fff;width:154px}
.city.last{width:145px;border-right:0}
.cn-name{display:block;font-family:"Noto Sans CJK SC",sans-serif;font-size:15px;line-height:17px;font-variant:normal}
.tool{width:150px;display:flex;align-items:center;padding-left:4px;border-left:1px solid #ddd;color:#666;text-transform:uppercase;font-size:11.500px;line-height:18px;text-align:center}
.tool:last-child{border-right:1px solid #ddd;width:151px}
.tool span{flex:1;text-align:center;padding-left:26px;padding-right:13px;white-space:nowrap}
.tool:last-child span{padding-left:30px;padding-right:2px}
.suggest{height:82px;background:#d7d7d7;display:flex;align-items:center;padding-left:372px}
.nearest{width:240px;height:62px;background:#ffde33;text-align:center;color:#222;flex:none;padding-top:7px}
.np{font-size:15px;line-height:20px;display:flex;justify-content:center;align-items:center;gap:7px}
.fr2{width:27px;height:20px}
.nv{font-size:19px;line-height:27px;white-space:nowrap}
.nv small{font-size:12.500px;color:#555}
.sgtext{width:770px;margin:2px 13px 0 4px;text-align:center;color:#777;font-size:18.400px;line-height:26px;flex:none;white-space:nowrap}
.sgtext a{color:#0085c8;font-weight:bold}
.sgtext span{color:#555}
.sgbtn{width:121px;display:flex;flex-direction:column;gap:2px;flex:none;text-align:center;font-size:16px}
.ok{height:35px;line-height:35px;background:#0085c8;color:#fff}
.no{height:35px;line-height:35px;background:#eee;color:#222;white-space:nowrap;font-size:17px}
.cards{display:flex;gap:24px;padding:32px 0 0 318px;height:607px;align-items:flex-start;border-bottom:1px solid #ddd}
.card{background:#f7f9f9;border-radius:6px;box-shadow:0 1px 3px rgba(0,0,0,.6);height:527px;flex:none}
.aq{width:601px;padding:0 9px}
.chead{height:33px;display:flex;align-items:center;white-space:nowrap;font-size:15px;position:relative;color:#222}
.cname{color:#0085c8;font-size:18px}
.cname b{font-weight:bold}
.csub{margin-left:5px;font-size:15.400px}
.c-ic1{margin-left:39px;flex:none}
.c-ic2{margin-left:11px;flex:none;width:27px}
.now{height:115px;display:flex}
.bignum{width:274px;background:#009966;color:#fff;font-size:100px;line-height:118px;text-align:center;border-radius:4px;font-family:"DejaVu Serif",serif;font-stretch:condensed;flex:none;overflow:hidden}
.status{margin-left:7px}
.good-txt{font-size:55px;line-height:62px;color:#009966;height:67px;padding-top:5px;margin-left:1px}
.upd{font-size:20px;line-height:24px}
.upd span{color:#999}
.temp{font-size:14.500px;line-height:24px}
.tbl{margin-top:17px;position:relative}
.thead{height:15px;display:flex;font-size:14px;line-height:15px;padding-left:55px}
.thead b{width:54px;text-align:left;font-size:13px}
.past{width:387px}
.thead .mn,.thead .mx{color:#222}
.hours{height:12px;margin-left:107px;position:relative}
.h2{height:14px}
.hours i{position:absolute;top:0;width:60px;margin-left:-30px;text-align:center;font:10.500px/14px "Liberation Sans",sans-serif;color:#333}
.hours i:nth-child(1){left:12.500px}
.hours i:nth-child(2){left:57.500px}
.hours i:nth-child(3){left:102.500px}
.hours i:nth-child(4){left:147.500px}
.hours i:nth-child(5){left:192.500px}
.hours i:nth-child(6){left:237.500px}
.hours i:nth-child(7){left:282.500px}
.hours i:nth-child(8){left:327.500px}
.hours i:nth-child(9){left:372.500px}
.hours i:nth-child(1),.hours i:nth-child(3),.hours i:nth-child(4),.hours i:nth-child(5),.hours i:nth-child(7),.hours i:nth-child(8),.hours i:nth-child(9){font-weight:bold;font-size:11px}
.row{height:32.300px;display:flex;align-items:flex-end;font-size:14px;line-height:16px;white-space:nowrap;color:#222}
.r1{height:27px}
.lab{width:70px;margin-bottom:5px;flex:none}
.lab b{font-size:13px}
.r1 .lab,.r1 .cur,.r1 .mn,.r1 .mx{margin-bottom:9px}
.lab small{font:10.500px "Liberation Sans",sans-serif;color:#999}
.cur{width:37px;text-align:center;margin-bottom:5px;flex:none;font-size:13.300px}
.chart{width:388px;height:28px;display:flex;align-items:flex-end;position:relative;flex:none}
.bar{width:7.480px;flex:none;border-top:1px solid rgba(255,255,255,.28);border-right:1px solid rgba(255,255,255,.13)}
.bar:first-child{width:5px}
.tick{position:absolute;top:0;bottom:0;width:1px;background:rgba(140,140,140,.8)}
.mn{width:32px;text-align:center;color:#1a7fc0;margin-bottom:5px;flex:none}
.mx{width:34px;text-align:center;color:#d9434e;margin-bottom:5px;flex:none}
.thead .mn,.thead .mx{margin:0}
.mapcard{width:593px;padding:1px;display:flex;flex-direction:column;align-items:center}
.map{width:591px;height:450px;position:relative;overflow:hidden;border-radius:5px 5px 0 0;flex:none}
.mapsvg{display:block;filter:blur(.45px)}
.ml text{font:14px "Noto Sans CJK SC",sans-serif;fill:#4d4d4d;paint-order:stroke;stroke:#f1eee8;stroke-width:2px}
.ml text.big{font-size:20px;fill:#666}
.layer{position:absolute;inset:0}
.shd{position:absolute;width:52px;height:15px;background:rgba(40,40,40,.6);filter:blur(6px);transform:rotate(-12deg)}
.mk{position:absolute;width:55px;height:64px}
.mk::before{content:"";position:absolute;left:25px;top:34px;width:5px;height:27px;background:#fff;border:1px solid #444;border-width:0 1px}
.mk::after{content:"";position:absolute;left:24px;top:57px;width:7px;height:7px;border-radius:50%;background:#fff;border:1px solid #555}
.sign{position:absolute;left:0;top:0;width:55px;height:37px;background:#009966;border:2px solid #fff;outline:1px solid #333;outline-offset:-1px;border-radius:4px;color:#fff;font:22px/32px "Liberation Sans",sans-serif;text-align:center;z-index:1}
.sign.y{background:#ffde33;color:#222}
.mctl{position:absolute;left:14px;top:15px;display:flex;flex-direction:column;font-family:"Liberation Sans",sans-serif;z-index:5}
.zoom{width:40px;height:78px;background:#fff;border:1px solid #ccc;border-radius:4px;display:flex;flex-direction:column;box-shadow:0 0 0 1px rgba(0,0,0,.08)}
.zoom a{height:38px;text-align:center;font:bold 28px/36px "Liberation Sans";color:#111}
.zoom a:first-child{border-bottom:1px solid #ccc}
.mbtn{width:41px;height:41px;background:#fff;border:2px solid #ccc;border-radius:4px;display:flex;align-items:center;justify-content:center}
.mfs{margin-top:14px}
.mlay{margin-top:14px}
.ad{width:400px;height:63px;background:#232b37;position:relative;display:flex;align-items:center;padding-left:10px;flex:none;border-bottom:1px solid #555}
.nlogo{flex:none}
.ntxt{color:#fff;font:bold 21px "Lato",sans-serif;margin-left:2px;letter-spacing:-.6px}
.ntxt span{font-weight:300;color:#ddd;letter-spacing:0}
.adx{position:absolute;right:0;top:0;display:flex;gap:0}
.adx svg{background:#fff;display:block}
.adbar{position:absolute;right:1px;top:20px;bottom:0;width:7px;background:#ffb900}
.forecast{background:#fafafa;height:200px;text-align:center}
.forecast h2{margin:0;padding-top:45px;font-variant:small-caps;font-weight:normal;font-size:28px;line-height:32px;color:#333}
.menu{position:absolute;left:0;right:0;bottom:0;height:47px;background:#0085c8;border-top:1px solid #bbb;display:grid;grid-template-columns:120px 113px 101px 116px 95px 140px 155px 117px 53px;justify-content:center;color:#fff}
.menu a{border-left:1px solid rgba(255,255,255,.35);display:flex;align-items:center;padding-left:4px;gap:5px}
.menu a:last-child{border-right:1px solid rgba(255,255,255,.35)}
.menu svg{width:32px;height:34px;flex:none;fill:none;stroke:#a9d6ef;stroke-width:1.800}
.menu b{font-size:21.500px;font-weight:bold;letter-spacing:-.3px}
.gear{padding-left:5px!important}
.taskbar{height:40px;background:linear-gradient(90deg,#252525,#2d2d2d 30%,#262626);display:flex;color:#e6e6e6;flex:none;justify-content:space-between}
.tleft{display:flex;padding-left:0}
.tk{width:45.900px;height:40px;display:flex;align-items:center;justify-content:center;position:relative;flex:none}
.tk svg{width:24px;height:24px}
.tk:nth-child(1),.tk:nth-child(2),.tk:nth-child(3),.tk:nth-child(4){width:44.500px}
.tk:nth-child(1){width:42px}
.tk:nth-child(2){width:50px}
.tk:nth-child(3){width:41px}
.tk:nth-child(4){width:45px;margin-right:5.600px}
.tk:nth-child(1) svg,.tk:nth-child(2) svg,.tk:nth-child(3) svg,.tk:nth-child(4) svg{width:22px;height:22px}
.act2{background:#424242;border-bottom:3px solid #76b9ed}
.run::after{content:"";position:absolute;left:6px;right:6px;bottom:0;height:3px;background:#76b9ed}
.dak{font:bold 6px "Liberation Sans";fill:#fff}
.ps{font:bold 8px "Liberation Sans";fill:#fff}
.tray{display:flex;align-items:center;font-size:17px;position:relative;width:580px}
.tray>*{position:absolute}
.help{left:-5px;width:30px;height:30px;border:3px solid #fff;border-radius:50%;background:#1c8fe0;color:#fff;font:bold 22px/24px "Liberation Sans";text-align:center}
.help i{position:absolute;right:-6px;bottom:-4px;width:13px;height:13px;border-radius:50%;background:#f5a623;font:bold 10px/13px "Liberation Sans"}
.cloud{left:69px}
.tt1{left:109px}
.tt2{left:157px}
.chev{left:230px}
.batt{left:268px}
.wifi{left:309px}
.vol{left:347px}
.pen{left:387px}
.eng{left:427px;font-size:15px}
.tclock{left:479px;font-size:15.500px}
.note{left:529px}
```
FILE: script.js
```js
var G="#009966",Y="#ffde33";
var D={
pm25:[60,40,25,35,60,62,55,35,40,25,20,25,25,20,35,30,40,45,62,45,62,62,60,62,60,68,65,67,80,57,45,68,60,45,45,48,48,58,60,55,58,62,60,67,75,60,62,58,60,45],
pm10:[67,53,23,35,60,50,40,40,35,67,20,32,40,40,35,37,45,35,78,45,53,55,75,69,63,69,78,83,80,69,60,57,53,48,53,49,47,47,49,60,53,37,50,60,60,43,45,53,67,0],
o3:[79,71,59,53,38,36,38,33,26,41,31,23,26,25,19,28,31,48,46,63,71,74,74,71,69,61,58,51,49,45,45,46,38,29,36,41,34,30,30,35,44,52,63,71,71,61,51,51,54,54],
no2:[30,40,35,52,78,83,62,50,63,27,52,48,42,42,50,45,55,35,40,33,37,20,23,40,30,39,39,38,42,44,34,28,38,45,33,27,36,38,39,33,27,27,32,29,28,50,52,36,33,33],
so2:[0,0,20,40,40,40,20,20,40,20,20,40,40,40,0,0,80,20,60,60,20,40,20,40,20,40,40,60,40,40,20,40,60,40,40,40,0,0,60,40,60,40,40,40,0,0,0,0,0,20],
co:[27,50,83,62,83,50,27,30,20,20,20,20,30,63,51,51,51,34,34,20,20,20,30,57,60,51,30,25,20,20,25,30,20,25,28,32,51,33,51,51,35,30,20,20,20,28,51,40,30,28],
temp:[38,23,23,26,25,40,53,30,25,22,20,23,26,30,31,36,42,40,40,40,41,42,36,38,34,28,31,33,33,26,24,24,24,24,26,29,32,33,35,38,44,59,59,59,70,73,80,51,45,43],
pres:[38,49,54,59,61,61,56,59,59,55,54,59,63,71,75,79,80,76,69,61,51,45,46,48,51,53,56,61,63,63,65,65,61,60,55,51,50,56,61,61,59,56,48,41,31,23,19,19,19,31,43],
hum:[55,70,70,74,77,65,47,70,77,80,83,83,83,77,73,67,55,57,57,57,54,52,59,57,64,70,65,64,72,77,79,79,79,79,79,72,72,67,64,56,43,39,39,30,27,20,45,52,56,64,64],
wind:[20,0,0,0,0,28,28,0,0,0,0,0,22,80,40,0,0,0,0,0,0,0,0,0,0,0,48,48,48,30,0,0,0,0,40,80,80,72,25,0,0,0,0,0,40,48,48,30,0,0]
};
function yset(a){return function(i){return a.indexOf(i)>=0?Y:G}}
function seq(f,t){var r=[];for(var i=f;i<=t;i++)r.push(i);return r}
var yp=[0,4,5,6,18].concat(seq(20,29),[31,32],seq(37,48));
function mix(a,b,t){return "rgb("+a.map(function(v,i){return Math.round(v+(b[i]-v)*t)}).join(",")+")"}
var C={
pm25:yset(yp),pm10:yset([27,28]),
temp:function(i,v){return v>=68?"#ff7e00":v>=55?"#ff9a00":v>=38?"#ffb000":"#ffcb00"},
pres:function(i,v){return v>=70?"#00ff99":"#00f5a0"},
hum:function(i,v){var t=Math.max(0,Math.min(1,(v-20)/60));return t>.5?mix([104,140,160],[72,120,205],(t-.5)*2):mix([184,192,80],[104,140,160],t*2)},
wind:function(i,v){return v>=70?"#d3def8":v>=45?"#e4e9fb":"#f3f5fd"}
};
document.querySelectorAll(".chart").forEach(function(c){
  var k=c.dataset.k,color=C[k]||function(){return G};
  D[k].forEach(function(v,i){
    var b=document.createElement("i");b.className="bar";
    b.style.height=(v/3)+"px";
    if(v>0)b.style.background=color(i,v);else b.style.border="0";
    c.appendChild(b);
  });
  for(var t=0;t<9;t++){var m=document.createElement("i");m.className="tick";m.style.left=(12+45.05*t)+"px";c.appendChild(m);}
});
var M=[
[989,350,55,1],[1239,345,46,0],[1318,334,38,0],[1258,371,35,0],[1100,379,46,0],[1147,398,50,1],[1225,377,50,1],[1339,395,38,0],[1245,403,46,0],[1333,414,50,1],
[1198,453,46,0],[1212,465,42,0],[1268,461,40,0],[1242,458,50,1],[1254,481,37,0],[1211,477,50,1],[1173,489,38,0],[1227,505,46,0],[1157,511,38,0],[1238,492,59,1],[1275,496,59,1],[1329,462,38,0],[1377,488,50,1],[1512,509,42,0],[1199,541,42,0],
[1374,606,38,0],[1310,654,46,0],[1046,687,53,1],[993,705,42,0],[1194,741,55,1]];
var ml=document.getElementById("markers"),sl=document.getElementById("shadows");
M.forEach(function(a){
  var x=a[0]-944,y=a[1]-353;
  var s=document.createElement("i");s.className="shd";s.style.left=(x+3)+"px";s.style.top=(y+31)+"px";sl.appendChild(s);
  var d=document.createElement("div");d.className="mk";d.style.left=(x-27)+"px";d.style.top=y+"px";
  var g=document.createElement("div");g.className="sign"+(a[3]?" y":"");g.textContent=a[2];d.appendChild(g);ml.appendChild(d);
});
var seed=7;function R(){seed=(seed*16807)%2147483647;return seed/2147483647}
var NS="http://www.w3.org/2000/svg",mg=document.getElementById("minor");
function ln(x,y,x2,y2,c,w){var l=document.createElementNS(NS,"line");l.setAttribute("x1",x);l.setAttribute("y1",y);l.setAttribute("x2",x2);l.setAttribute("y2",y2);l.setAttribute("stroke",c);l.setAttribute("stroke-width",w);mg.appendChild(l)}
for(var i=0;i<1500;i++){var x=944+R()*591,y=353+R()*450,len=10+R()*38,h=R()<.5,dx=h?len:len*.28,dy=h?-len*.2:len;
  if(x>1400+(y-353)*1.3)continue;
  var r=R();
  if(r<.62)ln(x,y,x+dx,y+dy,"#c9c6c1",.9);
  else if(r<.86)ln(x,y,x+dx,y+dy,"#b4d8e8",1.400);
  else ln(x,y,x+dx,y+dy,"#f5d3a3",1.300);
}
```
